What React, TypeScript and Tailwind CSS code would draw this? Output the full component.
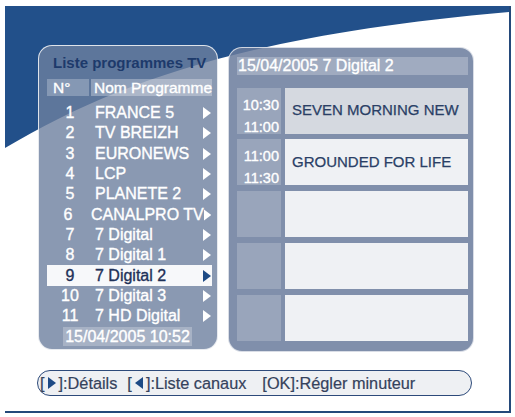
import React from 'react';

const FONT = { fontFamily: '"Liberation Sans", Arial, sans-serif' };

const channels = [
  { n: 1, name: 'FRANCE 5' },
  { n: 2, name: 'TV BREIZH' },
  { n: 3, name: 'EURONEWS' },
  { n: 4, name: 'LCP' },
  { n: 5, name: 'PLANETE 2' },
  { n: 6, name: 'CANALPRO TV' },
  { n: 7, name: '7 Digital' },
  { n: 8, name: '7 Digital 1' },
  { n: 9, name: '7 Digital 2' },
  { n: 10, name: '7 Digital 3' },
  { n: 11, name: '7 HD Digital' },
];

const programmes = [
  { start: '10:30', end: '11:00', title: 'SEVEN MORNING NEW', bg: 'bg-[#d5d9e0]' },
  { start: '11:00', end: '11:30', title: 'GROUNDED FOR LIFE', bg: 'bg-[#eff1f4]' },
  { start: '', end: '', title: '', bg: 'bg-[#eff1f4]' },
  { start: '', end: '', title: '', bg: 'bg-[#eff1f4]' },
  { start: '', end: '', title: '', bg: 'bg-[#eff1f4]' },
];

function Arrow({ dir = 'right', className }: { dir?: 'right' | 'left'; className?: string }) {
  return (
    <svg width="8" height="12" viewBox="0 0 8 12" className={className}>
      {dir === 'right' ? <polygon points="0,0 8,6 0,12" fill="currentColor" /> : <polygon points="8,0 0,6 8,12" fill="currentColor" />}
    </svg>
  );
}

function ChannelList() {
  return (
    <div className="w-[180px] h-[305px] shrink-0 rounded-[14px] border-[1.5px] border-white/80 bg-[#6d7f9f]/[0.8] pt-[8px] pl-[8px] pr-[5px] flex flex-col">
      <div className="pl-[6px] h-[18px] leading-[18px] text-[15px] font-bold text-[#1d3a6b] whitespace-nowrap">
        Liste programmes TV
      </div>
      <div className="mt-[7px] flex gap-[2px] h-[17px] text-[15.5px] leading-[17px] text-white [-webkit-text-stroke:0.35px_currentColor]">
        <div className="w-[44px] bg-white/25 pl-[6px]">N°</div>
        <div className="flex-1 bg-white/30 pl-[3px] whitespace-nowrap overflow-visible">Nom Programme</div>
      </div>
      <div className="mt-[7px] flex flex-col [-webkit-text-stroke:0.35px_currentColor]">
        {channels.map((c) => {
          const sel = c.n === 9;
          return (
            <div
              key={c.n}
              className={`flex items-center h-[20.3px] text-[16px] leading-[20px] ${sel ? 'bg-[#f7f8fa] text-[#1e3158]' : 'text-white'}`}
            >
              <div className="w-[46px] text-center">{c.n}</div>
              <div className="flex-1 pl-[2px] whitespace-nowrap">{c.name}</div>
              <Arrow className={`mr-[1px] ${sel ? 'text-[#1d4a85]' : 'text-white'}`} />
            </div>
          );
        })}
      </div>
      <div className="mt-[1px] ml-[16px] w-[129px] h-[19px] bg-white/25 text-white text-[16px] leading-[19px] text-center [-webkit-text-stroke:0.35px_currentColor]">
        15/04/2005 10:52
      </div>
    </div>
  );
}

function Guide() {
  return (
    <div className="mt-[2px] w-[246px] h-[305px] shrink-0 rounded-[14px] border-[1.5px] border-white/70 bg-[#6a7b9c]/[0.85] pt-[8.5px] pl-[8px] pr-[5.5px] flex flex-col">
      <div className="h-[18px] bg-white/25 text-white text-[16px] leading-[18px] pl-[1px] [-webkit-text-stroke:0.35px_currentColor]">
        15/04/2005 7 Digital 2
      </div>
      <div className="mt-[13px] flex flex-col gap-[5.75px]">
        {programmes.map((p, i) => (
          <div key={i} className="flex gap-[4px] h-[46px]">
            <div className="w-[44px] bg-white/20 text-white text-[14.5px] leading-[22px] text-right pr-[2px] pt-[6px] [-webkit-text-stroke:0.35px_currentColor]">
              <div>{p.start}</div>
              <div>{p.end}</div>
            </div>
            <div className={`flex-1 ${p.bg} flex items-center pl-[7px] text-[15px] text-[#2a3f66] whitespace-nowrap [-webkit-text-stroke:0.25px_currentColor]`}>
              {p.title}
            </div>
          </div>
        ))}
      </div>
    </div>
  );
}

function HelpBar() {
  return (
    <div className="mt-[18px] w-[435px] h-[26px] rounded-full border-[1.5px] border-[#2d4a7a] bg-[#eef0f3] flex items-center pl-[2px] text-[16.3px] text-[#35425c] whitespace-nowrap [-webkit-text-stroke:0.2px_currentColor]">
      <span className="flex items-center">
        [<Arrow className="text-[#1d4a85] mx-[3px]" />]:Détails
      </span>
      <span className="flex items-center ml-[10px]">
        [<Arrow dir="left" className="text-[#1d4a85] mx-[3px]" />]:Liste canaux
      </span>
      <span className="ml-[16px]">[OK]:Régler minuteur</span>
    </div>
  );
}

export default function App() {
  return (
    <div className="w-[515px] h-[417px] bg-white pl-[5px] pt-[6px]" style={FONT}>
      <div className="relative w-[506px] h-[407px] border-r-2 border-b-2 border-[#24497a]">
        <svg className="absolute inset-0" width="504" height="405" viewBox="0 0 504 405">
          <path d="M0 0 L504 0 L504 6 C245 29 115 74 0 142 Z" fill="#22508a" />
        </svg>
        <div className="relative pt-[39px] pl-[33px] flex flex-col">
          <div className="flex items-start gap-[10px]">
            <ChannelList />
            <Guide />
          </div>
          <div className="-ml-[1px]">
            <HelpBar />
          </div>
        </div>
      </div>
    </div>
  );
}
